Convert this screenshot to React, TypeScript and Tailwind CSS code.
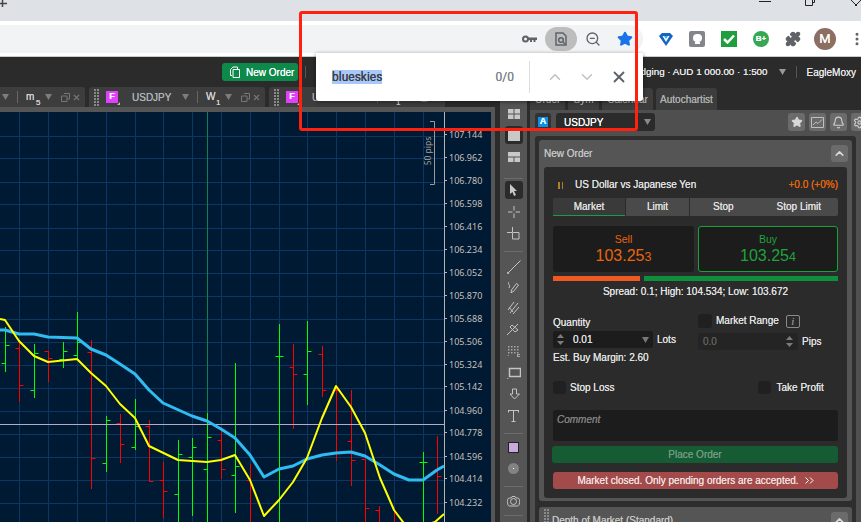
import { Bell, ChevronDown, ChevronUp, MoreVertical, Puzzle, Settings, Star, X, ZoomOut } from "lucide-react";

const gridX = [19.5, 48.5, 77.5, 106.5, 135.5, 163.5, 192.5, 221.5, 250.5, 279.5, 307.5, 336.5, 365.5, 394.5, 423.5];
const gridY = [136.5, 158.5, 182.5, 204.5, 228.5, 250.5, 273.5, 296.5, 319.5, 342.5, 365.5, 388.5, 411.5, 434.5, 457.5, 480.5, 503.5];

const axisLabels = [
  ["107.144", 134], ["106.962", 157], ["106.780", 180], ["106.598", 203], ["106.416", 226], ["106.234", 249],
  ["106.052", 272], ["105.870", 295], ["105.688", 318], ["105.506", 341], ["105.324", 364], ["105.142", 386],
  ["104.960", 410], ["104.778", 432], ["104.596", 456], ["104.414", 478], ["104.232", 502],
] as const;

// x, high, low, open, close
const upBars = [
  [5.5, 327, 372, 363, 345], [34.5, 344, 398, 390, 353], [63.5, 342, 368, 359, 351], [77.5, 312, 360, 355, 342],
  [106.5, 416, 472, 463, 420], [135.5, 399, 450, 447, 426], [178.5, 440, 522, 494, 454], [192.5, 438, 516, 457, 447],
  [207.5, 413, 522, 469, 437], [235.5, 363, 513, 475, 466], [279.5, 324, 522, 356, 356], [307.5, 321, 405, 374, 351],
  [423.5, 452, 522, 462, 462],
];
const downBars = [
  [19.5, 340, 402, 348, 385], [48.5, 351, 382, 351, 358], [91.5, 340, 489, 352, 458], [120.5, 414, 463, 423, 444],
  [149.5, 420, 482, 426, 481], [163.5, 462, 518, 480, 491], [221.5, 431, 479, 440, 469], [250.5, 464, 522, 480, 522],
  [293.5, 344, 429, 367, 374], [322.5, 346, 397, 354, 390], [336.5, 386, 461, 390, 390], [351.5, 390, 486, 441, 460],
  [365.5, 459, 522, 459, 508], [379.5, 506, 522, 510, 522], [394.5, 510, 522, 522, 522], [437.5, 436, 514, 470, 476],
];

const yellowLine =
  "0,319 5,320 19,341 34,356 48,362 77,359 91,373 106,386 120,404 135,418 149,446 178,460 207,462 221,460 235,455 250,480 264,516 279,500 293,482 307,458 322,418 336,386 351,407 365,433 380,478 394,510 409,530 435,522 444,514";
const blueLine =
  "0,330 5,330 19,334 34,334 48,337 77,338 91,349 106,355 120,364 135,374 149,390 163,403 192,416 207,421 221,429 235,438 250,455 264,477 279,469 293,466 307,459 322,455 336,453 351,452 365,456 380,465 394,474 409,480 423,480 437,470 444,466";

function Chart() {
  const bar = (b: number[], color: string) => (
    <g key={`${color}${b[0]}`} stroke={color} strokeWidth="1">
      <line x1={b[0]} x2={b[0]} y1={b[1]} y2={b[2]} />
      <line x1={b[0] - 4} x2={b[0]} y1={b[3] + 0.5} y2={b[3] + 0.5} />
      <line x1={b[0]} x2={b[0] + 4} y1={b[4] + 0.5} y2={b[4] + 0.5} />
    </g>
  );
  return (
    <svg width="491" height="410" viewBox="0 112 491 410" className="block bg-[#001a33]">
      {gridX.map((x) => (
        <line key={x} x1={x} x2={x} y1={112} y2={522} stroke="#0a3763" />
      ))}
      {gridY.map((y) => (
        <line key={y} x1={0} x2={444} y1={y} y2={y} stroke="#0a3763" />
      ))}
      <line x1={207.5} x2={207.5} y1={112} y2={522} stroke="#0f7f55" />
      {upBars.map((b) => bar(b, "#00ff00"))}
      {downBars.map((b) => bar(b, "#ff0000"))}
      <line x1={0} x2={444} y1={424.5} y2={424.5} stroke="#b8a9c9" />
      <polyline points={blueLine} fill="none" stroke="#2fbcf2" strokeWidth="3" strokeLinejoin="round" />
      <polyline points={yellowLine} fill="none" stroke="#ffff00" strokeWidth="2" strokeLinejoin="round" />
      <line x1={444.5} x2={444.5} y1={112} y2={522} stroke="#b5b5b5" />
      {axisLabels.map(([label, y]) => (
        <g key={label}>
          <line x1={445} x2={447} y1={y + 0.5} y2={y + 0.5} stroke="#b5b5b5" />
          <text x={449} y={y + 4} fontSize="9" fill="#c4c8cc" fontFamily="'Noto Sans', sans-serif">
            {label}
          </text>
        </g>
      ))}
      <path d="M430 121.5h4.5v63H430" fill="none" stroke="#9a9a9a" />
      <text
        transform="translate(431 151) rotate(-90)"
        textAnchor="middle"
        fontSize="8.5"
        fill="#a8abae"
        fontFamily="'Noto Sans', sans-serif"
      >
        50 pips
      </text>
    </svg>
  );
}

function Grip({ className = "" }: { className?: string }) {
  return (
    <div className={`grid grid-cols-2 gap-[1px] ${className}`}>
      {Array.from({ length: 12 }).map((_, i) => (
        <div key={i} className="h-[2px] w-[2px] bg-[#8a8a8a]" />
      ))}
    </div>
  );
}

function Caret({ className = "" }: { className?: string }) {
  return (
    <svg width="7" height="6" viewBox="0 0 7 6" className={`shrink-0 ${className}`}>
      <path d="M0 0h7L3.5 6z" fill="currentColor" />
    </svg>
  );
}

function ChartTab({ symbol, period, sub, className = "" }: { symbol: string; period: string; sub: string; className?: string }) {
  return (
    <div className={`flex h-[20px] w-[176px] shrink-0 items-center rounded-t-[3px] bg-[#3d3d3d] text-[#b4b4b4] ${className}`}>
      <Grip className="ml-[5px]" />
      <div className="relative ml-[7px] flex h-[12px] w-[12px] items-center justify-center bg-[#e040fb] text-[9px] font-bold text-white">
        F
        <div className="absolute -bottom-[2px] -right-[2px] h-0 w-0 border-b-[3px] border-l-[3px] border-b-[#bbb] border-l-transparent" />
      </div>
      <span className="ml-[14px] w-[42px] text-[10px] text-[#aeb4bc]">{symbol}</span>
      <Caret className="ml-[8px] text-[#7d7d7d]" />
      <div className="ml-[8px] h-[12px] w-px bg-[#666]" />
      <div className="relative ml-[8px] w-[19px] text-[10px] leading-none text-[#d5d5d5]">
        {period}
        <span className="absolute left-[10px] top-[7px] text-[8px]">{sub}</span>
      </div>
      <Caret className="text-[#7d7d7d]" />
      <svg width="9" height="9" viewBox="0 0 9 9" className="ml-[9px] text-[#777]">
        <path d="M3 .5h5.500V6H6M.5 3H6v5.500H.5z" fill="none" stroke="currentColor" />
      </svg>
      <X size={9} strokeWidth={3} className="ml-[2px] text-[#777]" />
    </div>
  );
}

function ToolBtn({ h, active, children }: { h: number; active?: boolean; children: React.ReactNode }) {
  return (
    <div style={{ height: h }} className="flex w-full shrink-0 items-center justify-center">
      <div className={`flex h-[18px] w-[18px] items-center justify-center rounded-[3px] ${active ? "bg-[#2b2b2b]" : ""}`}>{children}</div>
    </div>
  );
}

function ToolDivider() {
  return <div className="mx-[4px] h-px shrink-0 bg-[#6c6c6c]" />;
}

function Toolbar() {
  const s = { fill: "none", stroke: "#c4c4c4", strokeWidth: 1 };
  return (
    <div className="mt-[13px] flex w-[27px] flex-col bg-[#555] pt-[4px]">
      <ToolBtn h={20}>
        <svg width="12" height="10"><path d="M0 0h5.500v4.500H0zM6.500 0H12v4.500H6.500zM0 5.500h5.500V10H0zM6.500 5.500H12V10H6.500z" fill="#c8c8c8" /></svg>
      </ToolBtn>
      <ToolBtn h={22} active>
        <svg width="12" height="12"><rect width="12" height="12" fill="#c8c8c8" /></svg>
      </ToolBtn>
      <ToolBtn h={22}>
        <svg width="12" height="10"><path d="M0 0h12v4.500H0zM0 5.500h5.500V10H0zM6.500 5.500H12V10H6.500z" fill="#c8c8c8" /></svg>
      </ToolBtn>
      <div className="h-[10px] shrink-0" />
      <ToolDivider />
      <ToolBtn h={22} active>
        <svg width="9" height="12"><path d="M1 0l7 7H5l2 4-2 1-1.500-4L1 10z" fill="#c8c8c8" /></svg>
      </ToolBtn>
      <ToolBtn h={22}>
        <svg width="12" height="12" {...s}><path d="M6 0v4.500M6 7.500V12M0 6h4.500M7.500 6H12" /></svg>
      </ToolBtn>
      <ToolBtn h={22}>
        <svg width="13" height="14" {...s}><path d="M5.500 0v5M0 5.500h5M5.500 5.500h6.500v6.500H5.500z" /></svg>
      </ToolBtn>
      <div className="h-[6px] shrink-0" />
      <ToolDivider />
      <ToolBtn h={29}>
        <svg width="14" height="14" {...s}><path d="M13.500.5L1 13" /><circle cx="1" cy="13" r=".8" /></svg>
      </ToolBtn>
      <ToolBtn h={12}>
        <svg width="13" height="13" {...s}><path d="M2 1c-2 2 2 3 0 6M5 11l-1 1 .5-3 5-6.500 2 1.500-5 6.500z" /></svg>
      </ToolBtn>
      <ToolBtn h={30}>
        <svg width="14" height="14" {...s}><path d="M1 9l6-8M3 12l8-10M6 13l6-7M2 6l4 5" /></svg>
      </ToolBtn>
      <ToolBtn h={12}>
        <svg width="13" height="13" {...s}><path d="M0 12l5-5M5 7l6-6M3 4l5 5M5 2l6 5M3 4l2-2M8 9l3-2" /></svg>
      </ToolBtn>
      <ToolBtn h={32}>
        <svg width="13" height="11" fill="#a8a8a8">
          {[0, 3, 6].map((y) => [1, 4, 7, 10].map((x) => <rect key={`${x}${y}`} x={x} y={y} width="1.500" height="1.500" />))}
          <path d="M0 10l2-1v1zM10 8h3v1h-2v1h2v1h-3z" />
        </svg>
      </ToolBtn>
      <ToolBtn h={11}>
        <svg width="14" height="12"><path d="M2.500 1.500h11v8h-11z" fill="none" stroke="#c4c4c4" strokeWidth="1.500" /><path d="M0 11l2 1H0z" fill="#c4c4c4" /></svg>
      </ToolBtn>
      <ToolBtn h={32}>
        <svg width="14" height="13" {...s}><path d="M5.500 1h4v5h3L7.500 11 3 6h2.500z" /></svg>
      </ToolBtn>
      <ToolBtn h={11}>
        <svg width="11" height="12" {...s}><path d="M0 .5h11M5.500 .5V12M3.500 11.500h4M.5 0v2.500M10.500 0v2.500" /></svg>
      </ToolBtn>
      <div className="h-[12px] shrink-0" />
      <ToolDivider />
      <ToolBtn h={27}>
        <div className="h-[11px] w-[11px] border border-[#222] bg-[#c8a9dc]" />
      </ToolBtn>
      <ToolBtn h={15}>
        <div className="flex h-[11px] w-[11px] items-center justify-center rounded-full bg-[#838383]">
          <div className="h-[1px] w-[1px] bg-white" />
        </div>
      </ToolBtn>
      <div className="h-[10px] shrink-0" />
      <ToolDivider />
      <ToolBtn h={28}>
        <svg width="13" height="11" {...s}><path d="M4 2l1-1.500h3L9 2h1.500c2 0 2 2 2 3.500S12.500 10 10.500 10h-8C.5 10 .5 7 .5 5.500S.5 2 2.500 2z" /><circle cx="6.500" cy="5.500" r="3" /></svg>
      </ToolBtn>
      <ToolDivider />
    </div>
  );
}

function Box({ className = "" }: { className?: string }) {
  return <div className={`shrink-0 rounded-[3px] bg-[#202020] ${className}`} />;
}

function Spinner() {
  return (
    <svg width="7" height="11" viewBox="0 0 7 11" className="text-[#7b7b7b]">
      <path d="M3.500 0L7 4H0zM3.500 11L0 7h7z" fill="currentColor" />
    </svg>
  );
}

function PanelButton({ children, className = "" }: { children: React.ReactNode; className?: string }) {
  return <div className={`flex h-[17px] w-[17px] shrink-0 items-center justify-center overflow-hidden rounded-[3px] bg-[#6b6b6b] ${className}`}>{children}</div>;
}

function OrderCard() {
  return (
    <div className="mx-[5px] flex flex-col rounded-[3px] bg-[#2b2b2b] px-[9px] pb-[9px] text-[10px] leading-none text-[#e2e2e2]">
      <div className="flex h-[31px] shrink-0 items-center pt-[5px]">
        <div className="ml-[5px] flex gap-[2px]">
          <div className="h-[7px] w-[1.500px] bg-[#a8842c]" />
          <div className="h-[7px] w-[1.500px] bg-[#a8842c]" />
        </div>
        <span className="ml-[12px]">US Dollar vs Japanese Yen</span>
        <span className="ml-auto text-[#e8650e]">+0.0 (+0%)</span>
      </div>
      <div className="flex h-[18px] shrink-0 gap-px rounded-[2px]">
        <div className="flex w-[72px] items-center justify-center rounded-tl-[2px] border-b border-[#14a04a] bg-[#3a3a3a]">Market</div>
        <div className="flex w-[63px] items-center justify-center bg-[#4a4a4a]">Limit</div>
        <div className="flex flex-1 items-center rounded-r-[2px] bg-[#4a4a4a] pl-[23px]">
          Stop<span className="ml-[43px]">Stop Limit</span>
        </div>
      </div>
      <div className="mt-[10px] flex h-[46px] shrink-0 gap-[4px] [text-shadow:none]">
        <div className="flex w-[141px] flex-col items-center justify-center rounded-[3px] bg-[#1c1c1c] text-[#e8650e]">
          <span className="text-[10.500px]">Sell</span>
          <span className="mt-[3px] text-[16px]">103.25<span className="text-[12.500px]">3</span></span>
        </div>
        <div className="flex flex-1 flex-col items-center justify-center rounded-[3px] border border-[#17a338] bg-[#1c1c1c] text-[#1fa33d]">
          <span className="text-[10.500px]">Buy</span>
          <span className="mt-[3px] text-[16px]">103.25<span className="text-[12.500px]">4</span></span>
        </div>
      </div>
      <div className="mt-[4px] flex h-[5px] shrink-0 gap-[4px]">
        <div className="w-[87px] bg-[#f05a22]" />
        <div className="flex-1 bg-[#0e8f3c]" />
      </div>
      <div className="mt-[4px] text-center leading-[13px]">Spread: 0.1; High: 104.534; Low: 103.672</div>
      <div className="mt-[16px] flex h-[54px] shrink-0">
        <div className="flex w-[145px] flex-col">
          <div className="mt-[3px] leading-[12px]">Quantity</div>
          <div className="mt-[2px] flex items-center">
            <div className="flex h-[17px] w-[100px] items-center rounded-[3px] bg-[#1c1c1c] px-[4px]">
              <Spinner />
              <span className="ml-[9px]">0.01</span>
              <Caret className="ml-auto text-[#777]" />
            </div>
            <span className="ml-[4px]">Lots</span>
          </div>
          <div className="mt-[4px] leading-[12px]">Est. Buy Margin: 2.60</div>
        </div>
        <div className="flex flex-1 flex-col">
          <div className="flex h-[14px] items-center">
            <Box className="h-[14px] w-[14px]" />
            <span className="ml-[4px]">Market Range</span>
            <div className="ml-[7px] flex h-[13px] w-[14px] items-center justify-center rounded-[2px] border border-[#8a8a8a] font-['Liberation_Serif',serif] text-[11px] italic text-[#8a8a8a]">i</div>
          </div>
          <div className="mt-[5px] flex items-center">
            <div className="flex h-[17px] w-[100px] items-center rounded-[3px] bg-[#242424] px-[5px] text-[#5f5f5f]">
              0.0
              <span className="ml-auto"><Spinner /></span>
            </div>
            <span className="ml-[4px]">Pips</span>
          </div>
        </div>
      </div>
      <div className="mt-[13px] flex h-[13px] shrink-0 items-center">
        <Box className="h-[13px] w-[13px]" />
        <span className="ml-[4px]">Stop Loss</span>
        <Box className="ml-[144px] h-[13px] w-[13px]" />
        <span className="ml-[5px]">Take Profit</span>
      </div>
      <div className="mt-[16px] h-[31px] shrink-0 rounded-[3px] bg-[#1c1c1c] px-[4px] pt-[5px] italic text-[#808080]">Comment</div>
      <div className="-ml-px mt-[5px] flex h-[17px] shrink-0 items-center justify-center rounded-[3px] bg-[#155c35] text-[#6f9a80]">Place Order</div>
      <div className="mt-[9px] flex h-[17px] shrink-0 items-center justify-center rounded-[3px] bg-[#a34a4a] text-[#f0e0e0]">
        Market closed. Only pending orders are accepted.
        <svg width="9" height="7" viewBox="0 0 9 7" className="ml-[6px]">
          <path d="M.5.5l3 3-3 3M5 .5l3 3-3 3" fill="none" stroke="#fff" />
        </svg>
      </div>
    </div>
  );
}

function RightPanel() {
  return (
    <div className="flex w-[334px] flex-col">
      <div className="ml-[3px] flex h-[23px] shrink-0 items-end gap-[3px] pt-[1px] text-[10px] text-[#b0b0b0]">
        <div className="flex h-[22px] w-[35px] items-center justify-center rounded-t-[3px] bg-[#3d3d3d]">Order</div>
        <div className="flex h-[22px] w-[31px] items-center justify-center rounded-t-[3px] bg-[#3d3d3d]">Sym</div>
        <div className="flex h-[22px] w-[51px] items-center justify-center rounded-t-[3px] bg-[#3d3d3d]">Calendar</div>
        <div className="flex h-[22px] w-[61px] items-center justify-center rounded-t-[3px] bg-[#3d3d3d]">Autochartist</div>
      </div>
      <div className="ml-[3px] flex min-h-0 flex-1 flex-col bg-[#4f4f4f] pl-[5px] pr-[5px]">
        <div className="-mr-[5px] flex h-[26px] shrink-0 items-start overflow-hidden pt-[3px]">
          <div className="flex h-[18px] w-[16px] shrink-0 items-center justify-center rounded-[3px] bg-[#333]">
            <div className="flex h-[10px] w-[10px] items-center justify-center bg-[#0a90ea] text-[9px] font-bold text-white">A</div>
          </div>
          <div className="ml-[5px] flex h-[18px] w-[99px] shrink-0 items-center rounded-[3px] bg-[#2b2b2b] pl-[8px] pr-[4px] text-[10px] text-white">
            USDJPY
            <Caret className="ml-auto text-[#8a8a8a]" />
          </div>
          <div className="ml-[133px] flex gap-[4px]">
            <PanelButton className="!h-[18px]"><Star size={12} fill="#d8d8d8" stroke="#d8d8d8" /></PanelButton>
            <PanelButton className="!h-[18px]">
              <svg width="13" height="11" fill="none" stroke="#c0c0c0"><path d="M.5.500h12v10H.500z" /><path d="M2 8l3-3 2 1.500 4-4" /></svg>
            </PanelButton>
            <PanelButton className="!h-[18px]"><Bell size={13} stroke="#d0d0d0" /></PanelButton>
            <PanelButton className="!h-[18px]"><Settings size={13} stroke="#d0d0d0" /></PanelButton>
          </div>
        </div>
        <div className="flex min-h-0 flex-1 flex-col gap-[6px] overflow-hidden rounded-t-[3px] bg-[#2e2e2e] px-[4px] pt-[4px]">
          <div className="flex shrink-0 flex-col rounded-[3px] bg-[#555] pb-[3px]">
            <div className="flex h-[27px] shrink-0 items-center pl-[5px] pr-[4px] text-[10px] text-[#c4c4c4]">
              New Order
              <PanelButton className="ml-auto"><ChevronUp size={13} strokeWidth={3} stroke="#d8d8d8" /></PanelButton>
            </div>
            <OrderCard />
          </div>
          <div className="flex h-[40px] shrink-0 items-start rounded-t-[3px] bg-[#555] pl-[5px] pr-[4px] pt-[1px] text-[10px] text-[#c4c4c4]">
            <Grip className="mt-[1px]" />
            <span className="ml-[3px] mt-[5px]">Depth of Market (Standard)</span>
            <PanelButton className="ml-auto mt-[4px]"><ChevronUp size={13} strokeWidth={3} stroke="#d8d8d8" /></PanelButton>
          </div>
        </div>
      </div>
    </div>
  );
}

function BrowserBar() {
  return (
    <>
      <div className="relative h-[21px] shrink-0 bg-[#dee1e6]">
        <svg width="7" height="8" className="absolute left-0 top-0"><path d="M0 3.500h7M2.500 0v7" stroke="#444" strokeWidth="1.500" /></svg>
        <div className="absolute left-[759px] top-[1px] h-px w-[12px] bg-[#222]" />
        <svg width="10" height="6" className="absolute left-[805px] top-0" fill="none" stroke="#222"><path d="M.5 0v5.500h7V0M2.500 0v-1M7.500 2.500h2V0" /></svg>
        <svg width="10" height="6" className="absolute left-[851px] top-0" fill="none" stroke="#222"><path d="M0 0l6 6M10 0L4 6" /></svg>
      </div>
      <div className="flex h-[36px] shrink-0 items-start border-b border-[#ccc] bg-white pt-[4px]">
        <div className="flex h-[28px] w-[643px] shrink-0 items-center rounded-r-full bg-[#f1f3f4]">
          <svg width="15" height="8" viewBox="0 0 15 8" className="ml-[522px]">
            <circle cx="3.500" cy="4" r="2.500" fill="none" stroke="#5f6368" strokeWidth="2" />
            <path d="M6 2.500h9v2.500h-1.500v2h-2V5H10v2H8V5H6z" fill="#5f6368" />
          </svg>
          <div className="ml-[8px] flex h-[24px] w-[32px] items-center justify-center rounded-full bg-[#bdbdbd]">
            <svg width="12" height="14" viewBox="0 0 12 14" fill="none" stroke="#5f6368" strokeWidth="1.500">
              <path d="M1 1h7l3 3v9H1z" /><circle cx="6" cy="8" r="2.300" /><path d="M8 10l2 2" />
            </svg>
          </div>
          <ZoomOut size={16} className="ml-[8px] text-[#5f6368]" />
          <Star size={16} className="ml-[16px] fill-[#1a73e8] text-[#1a73e8]" />
        </div>
        <div className="relative h-[28px] flex-1">
          <svg width="14" height="13" viewBox="0 0 14 13" className="absolute left-[16px] top-[8px]">
            <path d="M0 3l3-3h8l3 3-7 10z" fill="#1565c0" /><path d="M3.500 3h7L7 9z" fill="#fff" /><path d="M5 3h4L7 6z" fill="#29b6f6" />
          </svg>
          <div className="absolute left-[46px] top-[6px] flex h-[16px] w-[16px] flex-col items-center justify-center rounded-[2px] bg-[#80868b]">
            <div className="h-[8px] w-[9px] rounded-full bg-white" />
            <div className="h-[2px] w-[5px] bg-white" />
          </div>
          <div className="absolute left-[78px] top-[6px] flex h-[16px] w-[16px] items-center justify-center bg-[#1e9e3e]">
            <svg width="12" height="10" fill="none" stroke="#fff" strokeWidth="2.500"><path d="M1 5l3.500 3.500L11 1.500" /></svg>
          </div>
          <div className="absolute left-[110px] top-[6px] flex h-[16px] w-[16px] items-center justify-center rounded-full bg-[#34a853] font-['Liberation_Sans',sans-serif] text-[8px] font-bold text-white">B+</div>
          <Puzzle size={16} className="absolute left-[142px] top-[6px] fill-[#5f6368] text-[#5f6368]" />
          <div className="absolute left-[171px] top-[3px] flex h-[22px] w-[22px] items-center justify-center rounded-full bg-[#8d6e63] font-['Roboto',sans-serif] text-[13px] text-white">M</div>
          <MoreVertical size={16} strokeWidth={2.500} className="absolute left-[206px] top-[6px] text-[#5f6368]" />
        </div>
      </div>
    </>
  );
}

function AppHeader() {
  return (
    <div className="flex h-[30px] shrink-0 items-center text-[10px] text-[#e8e8e8]">
      <div className="ml-[222px] flex h-[18px] w-[76px] items-center rounded-[3px] bg-[#0d8a4a] pl-[7px] text-white">
        <svg width="12" height="12" viewBox="0 0 12 12" fill="none" stroke="#fff" className="shrink-0"><path d="M3 9.500H1.500v-6L4 1h4.500v2M4 3.500h6.500v8H4z" /></svg>
        <span className="ml-[5px]">New Order</span>
      </div>
      <div className="ml-[7px] h-[12px] w-px bg-[#555]" />
      <span className="ml-auto text-[9.800px]">Hedging · AUD 1 000.00 · 1:500</span>
      <Caret className="ml-[11px] text-[#999]" />
      <div className="ml-[10px] h-[12px] w-px bg-[#555]" />
      <span className="ml-[10px] mr-[5px]">EagleMoxy</span>
    </div>
  );
}

function FindBar() {
  return (
    <div className="absolute left-[316px] top-[53px] flex h-[48px] w-[327px] items-center rounded-b-[3px] bg-white font-['Roboto',sans-serif] text-[12px] shadow-[0_1px_4px_rgba(0,0,0,0.45)]">
      <span className="ml-[16px] bg-[#a8c7fa] leading-[14px] text-[#3c4043]">blueskies</span>
      <span className="ml-auto text-[#80868b]">0/0</span>
      <div className="ml-[15px] h-[32px] w-px bg-[#dadce0]" />
      <ChevronUp size={18} className="ml-[16px] text-[#bdc1c6]" />
      <ChevronDown size={18} className="ml-[14px] text-[#bdc1c6]" />
      <X size={18} strokeWidth={2.500} className="ml-[14px] mr-[15px] text-[#5f6368]" />
    </div>
  );
}

export default function App() {
  return (
    <div className="relative flex h-[522px] w-[861px] flex-col overflow-hidden whitespace-nowrap bg-[#2b2b2b] font-['Liberation_Sans',sans-serif] [text-shadow:0_0_0.6px_currentColor]">
      <BrowserBar />
      <AppHeader />
      <div className="flex min-h-0 flex-1">
        <div className="flex w-[500px] shrink-0 flex-col overflow-hidden">
          <div className="flex h-[20px] shrink-0 gap-[4px]">
            <ChartTab symbol="USDJPY" period="m" sub="5" className="-ml-[91px]" />
            <ChartTab symbol="USDJPY" period="W" sub="1" />
            <ChartTab symbol="USDJPY" period="M" sub="1" />
          </div>
          <div className="w-[495px] flex-1 bg-[#555] pr-[4px] pt-[5px]">
            <Chart />
          </div>
        </div>
        <Toolbar />
        <RightPanel />
      </div>
      <FindBar />
      <div className="pointer-events-none absolute left-[299px] top-[11px] h-[120px] w-[339px] rounded-[3px] border-[3px] border-[#ff2010]" />
    </div>
  );
}
